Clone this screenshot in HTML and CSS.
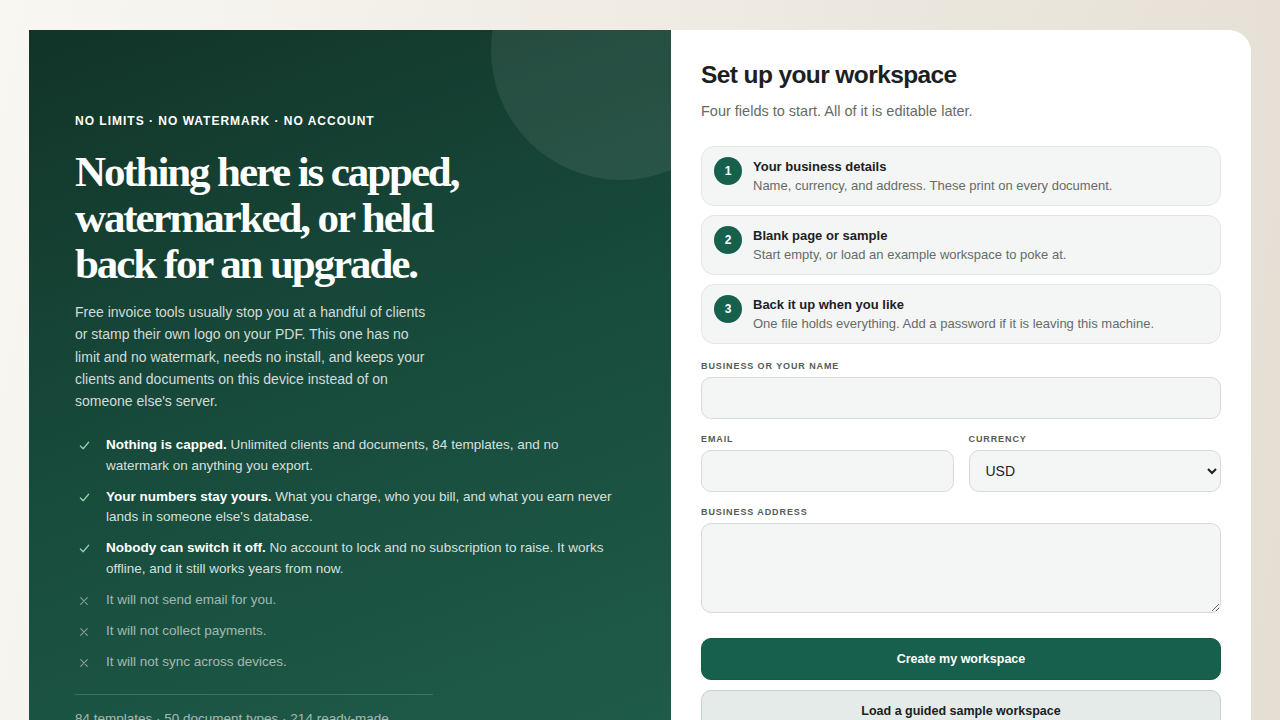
FILE: index.html
```html
<!DOCTYPE html>
<html lang="en">
<head>
    <meta charset="UTF-8">
    <meta name="viewport" content="width=device-width, initial-scale=1.0">
    <title>Set up your workspace</title>
    <link rel="stylesheet" href="styles.css">
</head>
<body>
    <div class="shell">
        <section class="pitch">
            <div class="pitch-circle"></div>
            <p class="eyebrow">NO LIMITS · NO WATERMARK · NO ACCOUNT</p>
            <h1>Nothing here is capped, watermarked, or held back for an upgrade.</h1>
            <p class="lede">Free invoice tools usually stop you at a handful of clients or stamp their own logo on your PDF. This one has no limit and no watermark, needs no install, and keeps your clients and documents on this device instead of on someone else's server.</p>

            <ul class="promise-list">
                <li class="yes">
                    <svg class="mark" viewBox="0 0 12 12"><polyline points="1.5,6.5 4.5,9.5 10.5,2.5"/></svg>
                    <span><strong>Nothing is capped.</strong> Unlimited clients and documents, 84 templates, and no watermark on anything you export.</span>
                </li>
                <li class="yes">
                    <svg class="mark" viewBox="0 0 12 12"><polyline points="1.5,6.5 4.5,9.5 10.5,2.5"/></svg>
                    <span><strong>Your numbers stay yours.</strong> What you charge, who you bill, and what you earn never lands in someone else's database.</span>
                </li>
                <li class="yes">
                    <svg class="mark" viewBox="0 0 12 12"><polyline points="1.5,6.5 4.5,9.5 10.5,2.5"/></svg>
                    <span><strong>Nobody can switch it off.</strong> No account to lock and no subscription to raise. It works offline, and it still works years from now.</span>
                </li>
                <li class="no">
                    <svg class="mark" viewBox="0 0 12 12"><path d="M2 2 L10 10 M10 2 L2 10"/></svg>
                    <span>It will not send email for you.</span>
                </li>
                <li class="no">
                    <svg class="mark" viewBox="0 0 12 12"><path d="M2 2 L10 10 M10 2 L2 10"/></svg>
                    <span>It will not collect payments.</span>
                </li>
                <li class="no">
                    <svg class="mark" viewBox="0 0 12 12"><path d="M2 2 L10 10 M10 2 L2 10"/></svg>
                    <span>It will not sync across devices.</span>
                </li>
            </ul>

            <p class="stats">84 templates · 50 document types · 214 ready-made</p>
        </section>

        <section class="setup">
            <h2>Set up your workspace</h2>
            <p class="sub">Four fields to start. All of it is editable later.</p>

            <ol class="steps">
                <li class="step">
                    <span class="step-num">1</span>
                    <div>
                        <div class="step-title">Your business details</div>
                        <div class="step-text">Name, currency, and address. These print on every document.</div>
                    </div>
                </li>
                <li class="step">
                    <span class="step-num">2</span>
                    <div>
                        <div class="step-title">Blank page or sample</div>
                        <div class="step-text">Start empty, or load an example workspace to poke at.</div>
                    </div>
                </li>
                <li class="step">
                    <span class="step-num">3</span>
                    <div>
                        <div class="step-title">Back it up when you like</div>
                        <div class="step-text">One file holds everything. Add a password if it is leaving this machine.</div>
                    </div>
                </li>
            </ol>

            <form class="setup-form" onsubmit="return false;">
                <label class="field">
                    <span class="field-label">BUSINESS OR YOUR NAME</span>
                    <input type="text" class="field-input">
                </label>
                <div class="field-row">
                    <label class="field">
                        <span class="field-label">EMAIL</span>
                        <input type="email" class="field-input">
                    </label>
                    <label class="field">
                        <span class="field-label">CURRENCY</span>
                        <select class="field-input">
                            <option>USD</option>
                            <option>EUR</option>
                            <option>GBP</option>
                        </select>
                    </label>
                </div>
                <label class="field">
                    <span class="field-label">BUSINESS ADDRESS</span>
                    <textarea class="field-input area"></textarea>
                </label>

                <button class="btn primary">Create my workspace</button>
                <button class="btn secondary">Load a guided sample workspace</button>
            </form>
        </section>
    </div>
</body>
</html>
```

FILE: styles.css
```css
body {
    margin: 0;
    font-family: "Liberation Sans", Arial, sans-serif;
    background: linear-gradient(100deg, #f8f7f2 0%, #ede8df 60%, #e4ded3 100%);
    color: #1d2421;
}

.shell {
    width: 1222px;
    margin: 30px auto;
    display: grid;
    grid-template-columns: 642px 1fr;
    border-radius: 0 22px 0 0;
    overflow: hidden;
    background: white;
}

/* left panel */

.pitch {
    position: relative;
    overflow: hidden;
    padding: 84px 46px 40px;
    background: linear-gradient(160deg, #123428 0%, #174a3b 45%, #205d4b 100%);
    color: #fff;
}

.pitch-circle {
    position: absolute;
    top: -110px;
    right: -80px;
    width: 260px;
    height: 260px;
    border-radius: 50%;
    background: rgba(255, 255, 255, 0.08);
}

.eyebrow {
    position: relative;
    margin: 0;
    font-size: 12px;
    font-weight: bold;
    letter-spacing: 1px;
}

h1 {
    position: relative;
    margin: 21px 0 0;
    width: 420px;
    font-family: "Liberation Serif", "Times New Roman", serif;
    font-size: 43px;
    line-height: 46px;
    letter-spacing: -2.1px;
    font-weight: bold;
}

.lede {
    margin: 14px 0 0;
    width: 360px;
    font-size: 14px;
    line-height: 22.3px;
    color: rgba(255, 255, 255, 0.82);
}

.promise-list {
    list-style: none;
    margin: 23px 0 0;
    padding: 0;
    width: 545px;
}

.promise-list li {
    display: flex;
    font-size: 13.5px;
    line-height: 20.5px;
    margin-bottom: 10.5px;
    color: rgba(255, 255, 255, 0.84);
}

.promise-list .mark {
    flex: none;
    width: 11px;
    height: 11px;
    margin: 5px 16px 0 4px;
    fill: none;
    stroke-width: 1.4;
    stroke-linecap: round;
    stroke-linejoin: round;
}

.promise-list li.yes .mark {
    stroke: #8fd3ae;
}

.promise-list li.no {
    color: rgba(255, 255, 255, 0.6);
}

.promise-list li.no .mark {
    width: 10px;
    height: 10px;
    margin: 6px 17px 0 4px;
    stroke: rgba(255, 255, 255, 0.45);
}

.promise-list strong {
    color: #fff;
}

.stats {
    margin: 22px 0 0;
    width: 358px;
    padding-top: 16px;
    border-top: 1px solid rgba(255, 255, 255, 0.16);
    font-size: 13.5px;
    color: rgba(255, 255, 255, 0.6);
}

/* right panel */

.setup {
    padding: 31px 30px 40px;
}

h2 {
    margin: 0;
    font-size: 24.5px;
    letter-spacing: -0.6px;
    color: #1c211f;
}

.sub {
    margin: 14px 0 0;
    font-size: 14.5px;
    color: #666b68;
}

.steps {
    list-style: none;
    margin: 27px 0 0;
    padding: 0;
    display: flex;
    flex-direction: column;
    gap: 9px;
}

.step {
    display: flex;
    align-items: center;
    gap: 11px;
    height: 60px;
    box-sizing: border-box;
    padding: 0 12px;
    background: #f4f6f5;
    border: 1px solid #e2e6e4;
    border-radius: 13px;
}

.step-num {
    flex: none;
    width: 28px;
    height: 28px;
    margin-top: -10px;
    border-radius: 50%;
    background: #17604e;
    color: white;
    font-size: 12px;
    font-weight: bold;
    display: flex;
    align-items: center;
    justify-content: center;
}

.step-title {
    font-size: 13px;
    font-weight: bold;
    color: #1c211f;
}

.step-text {
    margin-top: 4px;
    font-size: 13px;
    color: #666b68;
}

.setup-form {
    margin-top: 17px;
    display: flex;
    flex-direction: column;
}

.field {
    display: flex;
    flex-direction: column;
    flex: 1;
    margin-bottom: 15px;
}

.field-label {
    font-size: 9px;
    font-weight: bold;
    letter-spacing: 0.9px;
    color: #555b58;
    margin-bottom: 6px;
}

.field-row {
    display: flex;
    gap: 15px;
}

.field-input {
    height: 42px;
    box-sizing: border-box;
    border: 1px solid #d6dbd8;
    border-radius: 10px;
    background: #f4f6f5;
    font-family: "Liberation Sans", Arial, sans-serif;
    font-size: 14px;
    color: #1c211f;
    padding: 0 14px;
}

select.field-input {
    padding-left: 12px;
}

.field-input.area {
    height: 90px;
    padding: 10px 14px;
    resize: vertical;
}

.btn {
    height: 42px;
    border-radius: 10px;
    font-family: "Liberation Sans", Arial, sans-serif;
    font-size: 12.5px;
    font-weight: bold;
    cursor: pointer;
}

.btn.primary {
    margin-top: 10px;
    background: #17604e;
    color: white;
    border: 1px solid #145a48;
}

.btn.secondary {
    margin-top: 10px;
    background: #e4ebe8;
    color: #1c211f;
    border: 1px solid #c6d2cd;
}
```
